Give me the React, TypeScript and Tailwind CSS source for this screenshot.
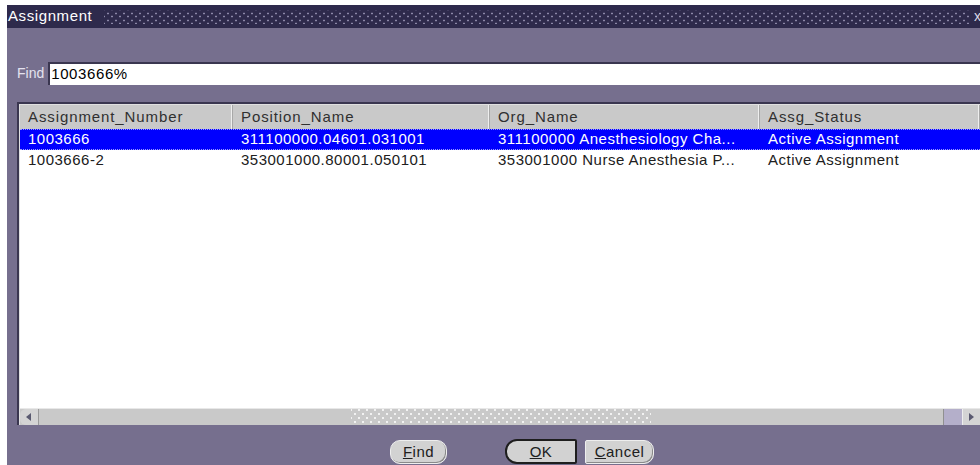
import React from 'react';

interface Assignment {
  number: string;
  position: string;
  org: string;
  status: string;
}

const rows: Assignment[] = [
  {
    number: '1003666',
    position: '311100000.04601.031001',
    org: '311100000 Anesthesiology Cha...',
    status: 'Active Assignment',
  },
  {
    number: '1003666-2',
    position: '353001000.80001.050101',
    org: '353001000 Nurse Anesthesia P...',
    status: 'Active Assignment',
  },
];

const columns = [
  { label: 'Assignment_Number', width: 'w-[213px]' },
  { label: 'Position_Name', width: 'w-[257px]' },
  { label: 'Org_Name', width: 'w-[270px]' },
  { label: 'Assg_Status', width: 'flex-1' },
];

const font = { fontFamily: '"Liberation Sans", Arial, sans-serif' };

const App: React.FC = () => {
  return (
    <div className="w-[980px] h-[465px] overflow-hidden bg-white pt-[5px] pl-[7px]" style={font}>
      <div className="h-full flex flex-col bg-[#766f8e]">
        {/* title bar */}
        <div className="h-[23px] bg-[#2e2a4c] flex items-center pl-[1px] shrink-0">
          <span className="text-white text-[15px] tracking-[0.6px]">Assignment</span>
          <div className="flex-1 ml-[12px] h-[14px] [background-image:radial-gradient(circle,#8c88a8_0.8px,transparent_1.2px),radial-gradient(circle,#8c88a8_0.8px,transparent_1.2px)] [background-size:8px_7px] [background-position:0_0,4px_3px]" />
          <span className="text-[#d8d6e4] text-[14px] ml-[4px] w-[6px] overflow-hidden">x</span>
        </div>

        {/* find field */}
        <div className="flex items-center mt-[34px] pl-[10px] shrink-0">
          <span className="text-[#e4e2ee] text-[14px] mr-[4px]">Find</span>
          <div className="flex-1 h-[23px] bg-white border-t-2 border-l-2 border-[#3a3650] flex items-center pl-[1px]">
            <span className="text-black text-[15px] tracking-[0.6px]">1003666%</span>
          </div>
        </div>

        {/* result table */}
        <div className="ml-[10px] mt-[17px] h-[323px] flex flex-col border-t-2 border-l-2 border-[#3a3650] shrink-0">
          <div className="flex-1 flex flex-col bg-white border-t border-l border-[#e0e0e0]">
            <div className="h-[24px] flex bg-[#c9c9c9] shrink-0">
              {columns.map((c) => (
                <div
                  key={c.label}
                  className={`${c.width} flex items-center pl-[8px] border-r border-[#a8a8a8] shadow-[inset_-1px_0_0_#eeeeee] text-[#303030] text-[15px] tracking-[0.9px]`}
                >
                  {c.label}
                </div>
              ))}
            </div>
            {rows.map((r, i) => (
              <div
                key={r.number}
                className={`h-[21px] flex items-center text-[15px] tracking-[0.5px] ${
                  i === 0 ? 'bg-[#0000ff] text-white border-y border-dotted border-[#9a9aff]' : 'bg-white text-[#202020]'
                }`}
              >
                <div className="w-[213px] pl-[8px]">{r.number}</div>
                <div className="w-[257px] pl-[8px]">{r.position}</div>
                <div className="w-[270px] pl-[8px] whitespace-nowrap overflow-hidden">{r.org}</div>
                <div className="flex-1 pl-[8px]">{r.status}</div>
              </div>
            ))}
            <div className="flex-1" />
            {/* horizontal scrollbar */}
            <div className="h-[17px] flex bg-[#c9c9c9] border-t border-[#e8e8e8] shrink-0">
              <div className="w-[19px] flex items-center justify-center bg-[#d4d4d4] border-r border-[#9a9a9a] rounded-l-[6px]">
                <svg width="6" height="8" viewBox="0 0 6 8">
                  <path d="M5 0 L0 4 L5 8 Z" fill="#5a5a70" />
                </svg>
              </div>
              <div className="w-[312px]" />
              <div className="w-[300px] [background-image:radial-gradient(circle,#f2f2f2_0.7px,transparent_1.1px),radial-gradient(circle,#f2f2f2_0.7px,transparent_1.1px)] [background-size:8px_8px] [background-position:0_1px,4px_5px]" />
              <div className="flex-1 border-r border-[#909090]" />
              <div className="w-[18px] bg-[#b4afca]" />
              <div className="w-[18px] flex items-center justify-center bg-[#d4d4d4] border-l border-[#eeeeee]">
                <svg width="6" height="8" viewBox="0 0 6 8">
                  <path d="M0 0 L5 4 L0 8 Z" fill="#5a5a70" />
                </svg>
              </div>
            </div>
          </div>
        </div>

        {/* action buttons */}
        <div className="flex-1 flex items-end pl-[383px] pb-[1px]">
          <button className="w-[57px] h-[24px] rounded-[10px] bg-[#d2d2d2] border border-[#eeeeee] shadow-[inset_-1px_-1px_0_#8a8a8a] text-[15px] tracking-[0.5px] text-[#202020]">
            <span className="underline underline-offset-1">F</span>ind
          </button>
          <button className="ml-[58px] w-[72px] h-[25px] rounded-l-[12px] rounded-r-[2px] bg-[#d2d2d2] border-2 border-[#1e1e1e] text-[15px] tracking-[0.5px] text-[#202020]">
            <span className="underline underline-offset-1">O</span>K
          </button>
          <button className="ml-[8px] w-[69px] h-[24px] rounded-r-[10px] rounded-l-[2px] bg-[#d2d2d2] border border-[#eeeeee] shadow-[inset_-1px_-1px_0_#8a8a8a] text-[15px] tracking-[0.5px] text-[#202020]">
            <span className="underline underline-offset-1">C</span>ancel
          </button>
        </div>
      </div>
    </div>
  );
};

export default App;
